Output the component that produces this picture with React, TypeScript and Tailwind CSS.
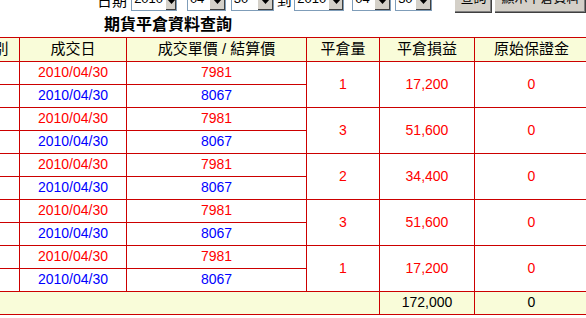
const font = "font-['Liberation_Sans','Noto_Sans_CJK_TC',sans-serif]";

function Select({ value, w }: { value: string; w: string }) {
  return (
    <div className={`flex h-[20px] ${w} border border-[#7f9db9] bg-white`}>
      <div className="flex-1 px-[2px] text-[13px] leading-[14px] text-black">{value}</div>
      <div className="flex w-[16px] items-center justify-center border-l border-t border-l-white border-t-white bg-[#d4d0c8] shadow-[inset_-1px_-1px_0_#404040]">
        <svg width="9" height="5" viewBox="0 0 9 5">
          <path d="M0 0h9L4.5 5z" fill="#000" />
        </svg>
      </div>
    </div>
  );
}

function Btn({ label, w }: { label: string; w: string }) {
  return (
    <div
      className={`h-[24px] ${w} shrink-0 border-l border-t border-white bg-[#d4d0c8] text-center text-[13px] leading-[16px] text-black shadow-[inset_-1px_-1px_0_#404040,inset_-2px_-2px_0_#808080]`}
    >
      {label}
    </div>
  );
}

const groups = [
  { qty: '1', pl: '17,200' },
  { qty: '3', pl: '51,600' },
  { qty: '2', pl: '34,400' },
  { qty: '3', pl: '51,600' },
  { qty: '1', pl: '17,200' },
];

const cell = 'border border-[#cc0000] h-[23px] p-0 text-center align-middle';

export default function App() {
  return (
    <div className={`w-[586px] h-[318px] overflow-hidden bg-white ${font}`}>
      {/* query bar, its top is scrolled out of view */}
      <div className="-mt-[10px] flex h-[22px] items-center text-black">
        <span className="ml-[97px] w-[35px] text-[15px] leading-[16px]">日期</span>
        <Select value="2010" w="w-[46px]" />
        <div className="w-[10px]" />
        <Select value="04" w="w-[40px]" />
        <div className="w-[5px]" />
        <Select value="30" w="w-[44px]" />
        <span className="ml-[3px] w-[18px] text-[15px] leading-[16px]">到</span>
        <Select value="2010" w="w-[50px]" />
        <div className="w-[8px]" />
        <Select value="04" w="w-[40px]" />
        <div className="w-[4px]" />
        <Select value="30" w="w-[37px]" />
        <div className="w-[23px]" />
        <Btn label="查詢" w="w-[38px]" />
        <div className="w-[2px]" />
        <Btn label="顯示平倉資料" w="w-[92px]" />
      </div>

      <div className="h-[25px] w-[336px] text-center text-[16px] font-bold leading-[25px] text-black">
        期貨平倉資料查詢
      </div>

      <table className="-ml-[48px] w-[636px] table-fixed border-collapse text-[14px]">
        <colgroup>
          <col className="w-[67px]" />
          <col className="w-[107px]" />
          <col className="w-[180px]" />
          <col className="w-[73px]" />
          <col className="w-[95px]" />
          <col className="w-[114px]" />
        </colgroup>
        <thead>
          <tr className="bg-[#f9fcd9] text-[15px] text-black">
            <td className={cell}>買賣別</td>
            <td className={cell}>成交日</td>
            <td className={cell}>成交單價 / 結算價</td>
            <td className={cell}>平倉量</td>
            <td className={cell}>平倉損益</td>
            <td className={cell}>原始保證金</td>
          </tr>
        </thead>
        <tbody>
          {groups.map((g, i) => (
            <>
              <tr key={`a${i}`}>
                <td className={cell}></td>
                <td className={`${cell} text-[#ff0000]`}>2010/04/30</td>
                <td className={`${cell} text-[#ff0000]`}>7981</td>
                <td rowSpan={2} className={`${cell} text-[#ff0000]`}>{g.qty}</td>
                <td rowSpan={2} className={`${cell} text-[#ff0000]`}>{g.pl}</td>
                <td rowSpan={2} className={`${cell} text-[#ff0000]`}>0</td>
              </tr>
              <tr key={`b${i}`}>
                <td className={cell}></td>
                <td className={`${cell} text-[#0000ff]`}>2010/04/30</td>
                <td className={`${cell} text-[#0000ff]`}>8067</td>
              </tr>
            </>
          ))}
          <tr className="bg-[#f9fcd9] text-black">
            <td colSpan={4} className={cell}></td>
            <td className={cell}>172,000</td>
            <td className={cell}>0</td>
          </tr>
        </tbody>
      </table>
    </div>
  );
}
